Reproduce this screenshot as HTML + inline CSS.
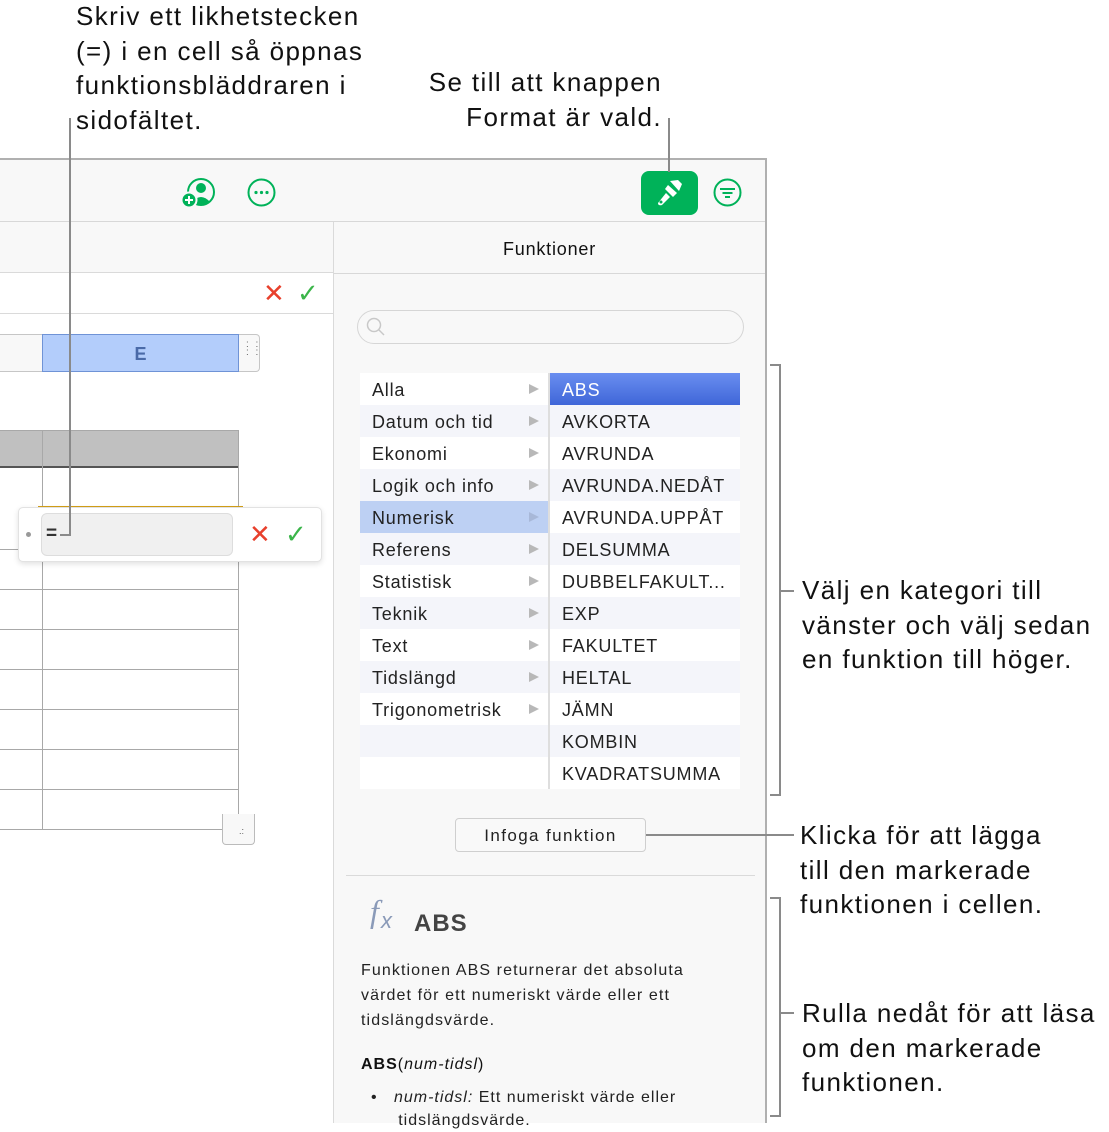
<!DOCTYPE html>
<html><head><meta charset="utf-8"><style>
*{margin:0;padding:0;box-sizing:border-box}
body{width:1109px;height:1123px;position:relative;overflow:hidden;background:#fff;font-family:"Liberation Sans",sans-serif;color:#1a1a1a}
.a{position:absolute}
.ann{position:absolute;font-size:26px;line-height:34.5px;color:#111;white-space:nowrap;letter-spacing:1.4px}
.ln{position:absolute;background:#8a8a8a}
.row{position:absolute;height:32px;font-size:18px;line-height:34px;padding-left:12px;color:#222;white-space:nowrap;letter-spacing:0.8px}
.tri{position:absolute;right:9px;top:11px;width:0;height:0;border-left:10px solid #b8b8b8;border-top:5px solid transparent;border-bottom:5px solid transparent}
.gl{position:absolute;background:#a8a8a8}
</style></head><body>

<div class="ann" style="left:76px;top:-1px">Skriv ett likhetstecken<br>(=) i en cell så öppnas<br>funktionsbläddraren i<br>sidofältet.</div>
<div class="ann" style="left:380px;top:65px;text-align:right;width:282px">Se till att knappen<br>Format är vald.</div>
<div class="ann" style="left:802px;top:573px">Välj en kategori till<br>vänster och välj sedan<br>en funktion till höger.</div>
<div class="ann" style="left:800px;top:818px">Klicka för att lägga<br>till den markerade<br>funktionen i cellen.</div>
<div class="ann" style="left:802px;top:996px">Rulla nedåt för att läsa<br>om den markerade<br>funktionen.</div>

<div class="a" style="left:0;top:158px;width:767px;height:965px;background:#f8f8f8;border-top:2px solid #b0b0b0;border-right:2px solid #b0b0b0"></div>
<div class="a" style="left:0;top:221px;width:765px;height:1px;background:#d8d8d8"></div>
<div class="a" style="left:0;top:272px;width:333px;height:851px;background:#fff"></div>
<div class="a" style="left:0;top:272px;width:333px;height:1px;background:#dadada"></div>
<div class="a" style="left:0;top:313px;width:333px;height:1px;background:#dadada"></div>
<div class="a" style="left:333px;top:222px;width:1px;height:901px;background:#dadada"></div>
<div class="a" style="left:263px;top:280px;font-size:26px;color:#e8402c;line-height:26px">✕</div>
<div class="a" style="left:297px;top:280px;font-size:26px;color:#3bb54a;line-height:26px">✓</div>

<div class="a" style="left:0;top:334px;width:260px;height:38px;background:#f8f8f8;border:1px solid #c6c6c6;border-left:none;border-radius:0 4px 4px 0"></div>
<div class="a" style="left:42px;top:334px;width:197px;height:38px;background:#b3cdfb;border:1px solid #6f93d6;text-align:center;font-weight:bold;font-size:18px;line-height:38px;color:#4a6aa8">E</div>
<div class="a" style="left:246px;top:341px;font-size:10px;line-height:8px;color:#666;letter-spacing:2px">: :<br>: :</div>

<div class="a" style="left:0;top:430px;width:239px;height:38px;background:#c0c0c0;border-top:1px solid #a8a8a8;border-right:1px solid #a8a8a8;border-bottom:2px solid #555"></div>
<div class="gl" style="left:42px;top:430px;width:1px;height:400px"></div>
<div class="gl" style="left:238px;top:430px;width:1px;height:400px"></div>
<div class="gl" style="left:0;top:549px;width:239px;height:1px"></div>
<div class="gl" style="left:0;top:589px;width:239px;height:1px"></div>
<div class="gl" style="left:0;top:629px;width:239px;height:1px"></div>
<div class="gl" style="left:0;top:669px;width:239px;height:1px"></div>
<div class="gl" style="left:0;top:709px;width:239px;height:1px"></div>
<div class="gl" style="left:0;top:749px;width:239px;height:1px"></div>
<div class="gl" style="left:0;top:789px;width:239px;height:1px"></div>
<div class="gl" style="left:0;top:829px;width:239px;height:1px"></div>
<div class="a" style="left:38px;top:506px;width:205px;height:2px;background:#d4a017"></div>
<div class="a" style="left:222px;top:814px;width:33px;height:31px;background:#f8f8f8;border:1px solid #bbb;border-radius:0 0 4px 4px;border-top:none"></div>
<div class="a" style="left:239px;top:826px;font-size:9px;color:#555">.:</div>

<div class="a" style="left:18px;top:507px;width:304px;height:55px;background:#fff;border:1px solid #e2e2e2;border-radius:5px;box-shadow:0 2px 6px rgba(0,0,0,.12)"></div>
<div class="a" style="left:26px;top:532px;width:5px;height:5px;border-radius:50%;background:#999"></div>
<div class="a" style="left:41px;top:513px;width:192px;height:43px;background:#f0f0f0;border:1px solid #ddd;border-radius:6px"></div>
<div class="a" style="left:46px;top:523px;font-size:19px;font-weight:bold;color:#333">=</div>
<div class="a" style="left:249px;top:521px;font-size:26px;color:#e8402c;line-height:26px">✕</div>
<div class="a" style="left:285px;top:521px;font-size:26px;color:#3bb54a;line-height:26px">✓</div>

<svg class="a" style="left:180px;top:176px" width="38" height="34" viewBox="0 0 38 34">
<circle cx="21" cy="16" r="13" fill="none" stroke="#00b259" stroke-width="2"/>
<circle cx="21" cy="12" r="5" fill="#00b259"/>
<path d="M12 26 Q21 16 30 26 Q21 32 12 26Z" fill="#00b259"/>
<circle cx="9" cy="24" r="7.5" fill="#00b259" stroke="#f8f8f8" stroke-width="2"/>
<path d="M9 20v8M5 24h8" stroke="#fff" stroke-width="2"/>
</svg>
<svg class="a" style="left:247px;top:178px" width="29" height="29"><circle cx="14.5" cy="14.5" r="13" fill="none" stroke="#00b259" stroke-width="2"/><circle cx="9" cy="14.5" r="1.6" fill="#00b259"/><circle cx="14.5" cy="14.5" r="1.6" fill="#00b259"/><circle cx="20" cy="14.5" r="1.6" fill="#00b259"/></svg>
<div class="a" style="left:641px;top:171px;width:57px;height:44px;background:#00b259;border-radius:8px"></div>
<svg class="a" style="left:652px;top:176px" width="36" height="34" viewBox="0 0 36 34">
<path d="M18 5 L26 4 L30 8 L27 15 Z" fill="#fff"/>
<path d="M16 9 L25 17 L21 21 L13 13 Z" fill="#fff"/>
<path d="M14 17 L18 21 L10 29 Q6 30 6 27 Z" fill="#fff"/>
<circle cx="9" cy="26" r="1.5" fill="#00b259"/>
</svg>
<svg class="a" style="left:713px;top:178px" width="29" height="29"><circle cx="14.5" cy="14.5" r="13" fill="none" stroke="#00b259" stroke-width="2"/><path d="M7 11h15M9.5 15h10M12 19h5" stroke="#00b259" stroke-width="2"/></svg>

<div class="a" style="left:334px;top:239px;width:431px;text-align:center;font-size:18px;color:#111;letter-spacing:0.8px">Funktioner</div>
<div class="a" style="left:334px;top:273px;width:431px;height:1px;background:#d8d8d8"></div>
<div class="a" style="left:357px;top:310px;width:387px;height:34px;border:1.5px solid #d6d6d6;border-radius:17px;background:#f8f8f8"></div>
<svg class="a" style="left:365px;top:316px" width="22" height="22"><circle cx="9" cy="9" r="6.5" fill="none" stroke="#c8c8c8" stroke-width="1.5"/><path d="M14 14l5 5" stroke="#c8c8c8" stroke-width="1.5"/></svg>

<div class="a" style="left:360px;top:373px;width:380px;height:416px;background:#fff"></div>
<div class="a" style="left:548px;top:373px;width:2px;height:416px;background:#dedede"></div>
<div style="position:absolute;left:360px;top:373px;width:188px">
<div class="row" style="top:0;width:188px;background:#fff">Alla<span class="tri"></span></div>
<div class="row" style="top:32px;width:188px;background:#f4f5fa">Datum och tid<span class="tri"></span></div>
<div class="row" style="top:64px;width:188px;background:#fff">Ekonomi<span class="tri"></span></div>
<div class="row" style="top:96px;width:188px;background:#f4f5fa">Logik och info<span class="tri"></span></div>
<div class="row" style="top:128px;width:188px;background:#bdd0f3">Numerisk<span class="tri" style="border-left-color:#a8b8d8"></span></div>
<div class="row" style="top:160px;width:188px;background:#f4f5fa">Referens<span class="tri"></span></div>
<div class="row" style="top:192px;width:188px;background:#fff">Statistisk<span class="tri"></span></div>
<div class="row" style="top:224px;width:188px;background:#f4f5fa">Teknik<span class="tri"></span></div>
<div class="row" style="top:256px;width:188px;background:#fff">Text<span class="tri"></span></div>
<div class="row" style="top:288px;width:188px;background:#f4f5fa">Tidslängd<span class="tri"></span></div>
<div class="row" style="top:320px;width:188px;background:#fff">Trigonometrisk<span class="tri"></span></div>
<div class="row" style="top:352px;width:188px;background:#f4f5fa"></div>
</div>
<div style="position:absolute;left:550px;top:373px;width:190px">
<div class="row" style="top:0;width:190px;background:linear-gradient(#6a8ef0,#3f66d8);color:#fff">ABS</div>
<div class="row" style="top:32px;width:190px;background:#f4f5fa">AVKORTA</div>
<div class="row" style="top:64px;width:190px;background:#fff">AVRUNDA</div>
<div class="row" style="top:96px;width:190px;background:#f4f5fa">AVRUNDA.NEDÅT</div>
<div class="row" style="top:128px;width:190px;background:#fff">AVRUNDA.UPPÅT</div>
<div class="row" style="top:160px;width:190px;background:#f4f5fa">DELSUMMA</div>
<div class="row" style="top:192px;width:190px;background:#fff">DUBBELFAKULT...</div>
<div class="row" style="top:224px;width:190px;background:#f4f5fa">EXP</div>
<div class="row" style="top:256px;width:190px;background:#fff">FAKULTET</div>
<div class="row" style="top:288px;width:190px;background:#f4f5fa">HELTAL</div>
<div class="row" style="top:320px;width:190px;background:#fff">JÄMN</div>
<div class="row" style="top:352px;width:190px;background:#f4f5fa">KOMBIN</div>
<div class="row" style="top:384px;width:190px;background:#fff">KVADRATSUMMA</div>
</div>

<div class="a" style="left:455px;top:818px;width:191px;height:34px;border:1px solid #cfcfcf;border-radius:4px;background:#f9f9f9;text-align:center;font-size:17px;line-height:33px;color:#222;letter-spacing:1.4px">Infoga funktion</div>
<div class="a" style="left:346px;top:875px;width:409px;height:1px;background:#dadada"></div>
<div class="a" style="left:370px;top:893px;font-family:'Liberation Serif',serif;font-style:italic;font-size:32px;color:#8a9ab8">f</div>
<div class="a" style="left:381px;top:908px;font-style:italic;font-size:22px;color:#8a9ab8">x</div>
<div class="a" style="left:414px;top:910px;font-size:24px;font-weight:bold;color:#444;letter-spacing:1px">ABS</div>
<div class="a" style="left:361px;top:958px;font-size:16px;line-height:25px;color:#222;letter-spacing:1.1px">Funktionen ABS returnerar det absoluta<br>värdet för ett numeriskt värde eller ett<br>tidslängdsvärde.</div>
<div class="a" style="left:361px;top:1056px;font-size:16px;color:#111;letter-spacing:1px"><b>ABS</b>(<i>num-tidsl</i>)</div>
<div class="a" style="left:371px;top:1086px;font-size:16px;line-height:23px;color:#222;letter-spacing:1px">•&nbsp;&nbsp;&nbsp;<i>num-tidsl:</i> Ett numeriskt värde eller<br>&nbsp;&nbsp;&nbsp;&nbsp;&nbsp;tidslängdsvärde.</div>

<div class="ln" style="left:69px;top:118px;width:2px;height:418px"></div>
<div class="ln" style="left:60px;top:534px;width:11px;height:2px"></div>
<div class="ln" style="left:668px;top:118px;width:2px;height:54px"></div>
<div class="ln" style="left:779px;top:364px;width:2px;height:432px"></div>
<div class="ln" style="left:770px;top:364px;width:10px;height:2px"></div>
<div class="ln" style="left:770px;top:794px;width:10px;height:2px"></div>
<div class="ln" style="left:780px;top:590px;width:14px;height:2px"></div>
<div class="ln" style="left:646px;top:834px;width:148px;height:2px"></div>
<div class="ln" style="left:779px;top:897px;width:2px;height:220px"></div>
<div class="ln" style="left:770px;top:897px;width:10px;height:2px"></div>
<div class="ln" style="left:770px;top:1115px;width:10px;height:2px"></div>
<div class="ln" style="left:780px;top:1012px;width:14px;height:2px"></div>
</body></html>
